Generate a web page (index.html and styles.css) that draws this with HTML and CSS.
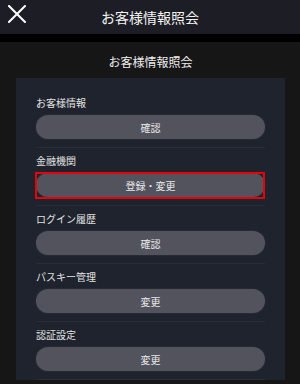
FILE: index.html
```html
<!DOCTYPE html>
<html lang="ja">
<head>
<meta charset="utf-8">
<link rel="stylesheet" href="styles.css">
</head>
<body>
<header class="topbar">
  <button class="close" aria-label="閉じる">
    <svg width="18" height="18" viewBox="0 0 18 18"><path d="M1 1L17 17M17 1L1 17" stroke="#fff" stroke-width="2" stroke-linecap="square" fill="none"/></svg>
  </button>
  <h1 class="topbar-title">お客様情報照会</h1>
</header>
<div class="strip"></div>
<main class="content">
  <h2 class="page-title">お客様情報照会</h2>
  <section class="panel">
    <div class="item">
      <div class="label">お客様情報</div>
      <div class="btn">確認</div>
    </div>
    <div class="item">
      <div class="label">金融機関</div>
      <div class="btn hl">登録・変更</div>
    </div>
    <div class="item">
      <div class="label">ログイン履歴</div>
      <div class="btn">確認</div>
    </div>
    <div class="item">
      <div class="label">パスキー管理</div>
      <div class="btn">変更</div>
    </div>
    <div class="item">
      <div class="label">認証設定</div>
      <div class="btn">変更</div>
    </div>
  </section>
</main>
</body>
</html>
```
FILE: styles.css
```css
* { box-sizing: border-box; }
html, body { margin: 0; padding: 0; }
body {
  background: #161616;
  font-family: "Noto Sans CJK JP", "Noto Sans", sans-serif;
  color: #e6e6e6;
  height: 384px;
  overflow: hidden;
}
.topbar {
  height: 34px;
  background: #1d1e25;
  display: flex;
  align-items: center;
  justify-content: center;
  position: relative;
}
.close {
  position: absolute;
  left: 8px;
  top: 5px;
  width: 18px;
  height: 18px;
  padding: 0;
  border: 0;
  background: none;
  display: block;
}
.close svg { display: block; }
.topbar-title {
  margin: 0;
  font-size: 14px;
  font-weight: 400;
  color: #f2f2f2;
  line-height: 20px;
}
.strip { height: 8px; background: #000; }
.content { padding: 0 15px 0 16px; }
.page-title {
  margin: 0;
  height: 36px;
  display: flex;
  align-items: center;
  justify-content: center;
  font-size: 12px;
  font-weight: 400;
  color: #ededed;
  padding-top: 2px;
}
.panel {
  background: #1e232d;
  padding: 12px 20px 0;
}
.item {
  padding-top: 6px;
  padding-bottom: 8px;
  border-bottom: 1px solid #282d37;
}
.label {
  font-size: 10px;
  line-height: 14px;
  color: #e2e2e2;
  margin-bottom: 5px;
}
.btn {
  height: 24px;
  border-radius: 12px;
  background: #52535d;
  color: #e8e8e8;
  font-size: 10px;
  display: flex;
  align-items: center;
  justify-content: center;
  position: relative;
  box-shadow: 0 0 0 1px #262a33;
}
.btn.hl::after {
  content: "";
  position: absolute;
  left: -1px;
  right: 0;
  top: -1px;
  bottom: -2px;
  border: 2px solid #e8000b;
}
```
